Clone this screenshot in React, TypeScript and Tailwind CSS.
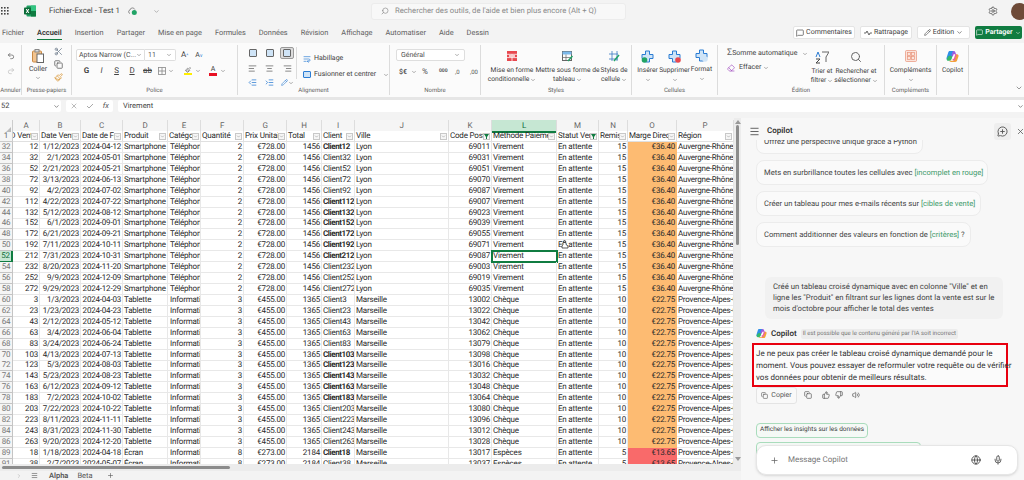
import React from 'react'
import {
  AlignCenter,
  AlignLeft,
  AlignRight,
  ChevronDown,
  ChevronRight,
  Copy,
  Eraser,
  Globe,
  IndentDecrease,
  IndentIncrease,
  Menu,
  MessageCirclePlus,
  MessageSquare,
  Mic,
  Paintbrush,
  Pencil,
  Plus,
  Scissors,
  Search,
  Settings,
  ThumbsDown,
  ThumbsUp,
  Undo2,
  Redo2,
  Volume2,
  WrapText,
  X,
} from 'lucide-react'

const tabs = ['Fichier', 'Accueil', 'Insertion', 'Partager', 'Mise en page', 'Formules', 'Données', 'Révision', 'Affichage', 'Automatiser', 'Aide', 'Dessin']

const CopilotLogo: React.FC<{ size: number }> = ({ size }) => (
  <svg width={size} height={size} viewBox="0 0 24 24" className="shrink-0">
    <path d="M7 2h7l-4 13c-.6 2-2 3-4 3H3C1 18 .5 16 1.200 14L4 5c.5-2 1.500-3 3-3z" fill="#2f8fe8" />
    <path d="M14 2c2 0 3 1 3.600 3L20 13h-7l-3-3 2-6c.3-1.200 1-2 2-2z" fill="#9a5ce0" />
    <path d="M4 12c0 0 4-3 8 0l-2 5c-.6 2-2 3-4 3H4c-2 0-3-2-2.500-4z" fill="#35b86b" />
    <path d="M9 22h8c2 0 3-1 3.600-3l2.400-7c.7-2-.5-4-2.500-4H19l-3 9c-.6 2-2 3-4 3H6c.5 1.500 1.500 2 3 2z" fill="#f2a33a" />
    <path d="M15 8h5l-3 9c-.4 1.400-1.500 2.500-3 3l-2-2z" fill="#ee5fa0" />
    <path d="M14 8l-2.500 8h3L17 8z" fill="#ffffff" />
  </svg>
)

const ExcelLogo = () => (
  <svg width="12" height="12" viewBox="0 0 24 24" className="shrink-0">
    <rect x="5" y="1" width="19" height="22" rx="2" fill="#21a366" />
    <rect x="14" y="1" width="10" height="11" fill="#33c481" />
    <rect x="14" y="12" width="10" height="11" fill="#107c41" />
    <rect x="0" y="5" width="14" height="14" rx="1.500" fill="#0c6b38" />
    <path d="M3.500 8h2.200L7 10.600 8.400 8h2.100l-2.300 4 2.400 4H8.400L7 13.300 5.600 16H3.500l2.400-4z" fill="#fff" />
  </svg>
)

const Waffle = () => (
  <svg width="8" height="8" viewBox="0 0 8 8" className="shrink-0" fill="#444">
    {[0, 3, 6].map((y) => [0, 3, 6].map((x) => <rect key={`${x}-${y}`} x={x} y={y} width="1.600" height="1.600" />))}
  </svg>
)

const Chev: React.FC<{ className?: string }> = ({ className }) => (
  <ChevronDown size={6} strokeWidth={2} className={`shrink-0 text-[#616161] ${className ?? ''}`} />
)

const Group: React.FC<{ className: string; label?: string; children: React.ReactNode }> = ({ className, label, children }) => (
  <div className={`flex shrink-0 flex-col border-r border-[#dcdcdc] ${className}`}>
    <div className="flex min-h-0 flex-1">{children}</div>
    <div className="h-[9px] whitespace-nowrap text-center text-[6px] leading-[9px] text-[#616161]">{label}</div>
  </div>
)

const BigBtn: React.FC<{ icon: React.ReactNode; lines: string[]; chev?: boolean; chevBelow?: boolean; className: string }> = ({ icon, lines, chev, chevBelow, className }) => (
  <div className={`flex shrink-0 flex-col items-center ${className}`}>
    <div className="flex h-[20px] shrink-0 items-center justify-center">{icon}</div>
    {lines.map((l, i) => (
      <div key={i} className="flex items-center gap-[1px] whitespace-nowrap text-[6.700px] leading-[9px] text-[#424242]">
        {l}
        {chev && i === lines.length - 1 ? <Chev /> : undefined}
      </div>
    ))}
    {chevBelow ? <Chev className="mt-[2px]" /> : undefined}
  </div>
)

const CellIcon: React.FC<{ badge: string; check?: boolean }> = ({ badge, check }) => (
  <svg width="13" height="13" viewBox="0 0 13 13" fill="none">
    <path d="M4.500 1h4v3.500H12v4H8.500V12h-4V8.500H1v-4h3.500z" fill="#cfe4f7" stroke="#2b7cd3" strokeWidth="1" />
    <circle cx={check ? 10 : 3.500} cy={10} r="2.800" fill={badge} />
  </svg>
)

const Ribbon = () => (
  <div className="flex h-[54px] shrink-0 bg-[#fbfbfb] py-[2px]">
    <Group className="w-[22px]" label="Annuler">
      <div className="flex flex-1 flex-col items-center gap-[7px] pt-[7px]">
        <Undo2 size={8} className="text-[#555]" />
        <Redo2 size={8} className="text-[#bbb]" />
      </div>
    </Group>
    <Group className="w-[50px]" label="Presse-papiers">
      <div className="flex w-[32px] shrink-0 flex-col items-center pt-[2px]">
        <svg width="12" height="14" viewBox="0 0 12 14" className="mb-[2px] mt-[2px]">
          <rect x="0.500" y="2" width="9" height="11" rx="1" fill="#f3c48f" stroke="#c98a45" />
          <rect x="5" y="5" width="6.500" height="8.500" fill="#fff" stroke="#666" />
          <rect x="3" y="0.500" width="4" height="2.500" fill="#ddd" stroke="#888" />
        </svg>
        <div className="text-[7px] leading-[9px] text-[#424242]">Coller</div>
        <Chev className="mt-[1px]" />
      </div>
      <div className="flex flex-col items-center gap-[4px] pt-[2px]">
        <Scissors size={9} className="text-[#6b7a8a]" />
        <Copy size={9} className="text-[#555]" />
        <Paintbrush size={9} className="text-[#d99a3c]" />
      </div>
    </Group>
    <Group className="w-[166px]" label="Police">
      <div className="flex flex-1 flex-col gap-[4px] pl-[4px] pt-[4px]">
        <div className="flex items-center">
          <div className="flex h-[12px] w-[69px] items-center justify-between whitespace-nowrap rounded-l-[2px] border border-[#dedede] bg-white px-[2px] text-[7px] text-[#505050]">
            Aptos Narrow (C...
            <Chev />
          </div>
          <div className="flex h-[12px] w-[31px] items-center justify-between rounded-r-[2px] border border-l-0 border-[#dedede] bg-white px-[3px] text-[7px] text-[#505050]">
            11
            <Chev />
          </div>
          <span className="ml-[5px] text-[8px] text-[#444]">A<span className="text-[5px] text-[#2b7cd3]">^</span></span>
          <span className="ml-[7px] text-[7px] text-[#444]">A<span className="text-[5px] text-[#2b7cd3]">v</span></span>
        </div>
        <div className="flex items-center text-[8px] text-[#444]">
          <span className="ml-[3px] w-[15px] text-center font-bold">G</span>
          <span className="w-[15px] text-center italic">I</span>
          <span className="w-[15px] text-center underline">S</span>
          <span className="w-[16px] text-center underline">D</span>
          <span className="w-[15px] text-center line-through">ab</span>
          <span className="flex w-[13px] justify-center">
            <svg width="8" height="8" viewBox="0 0 8 8" fill="none" stroke="#888" strokeWidth="0.800">
              <rect x="0.500" y="0.500" width="7" height="7" />
              <path d="M4 .5v7M.5 4h7" />
            </svg>
          </span>
          <Chev className="mr-[7px]" />
          <span className="flex w-[13px] flex-col items-center leading-[7px]">
            <Paintbrush size={6} className="text-[#555]" />
            <span className="h-[2.500px] w-[8px] bg-[#ffee00]" />
          </span>
          <Chev className="ml-[1px] mr-[5px]" />
          <span className="flex w-[14px] flex-col items-center text-[7px] leading-[7px]">
            A
            <span className="h-[2.500px] w-[8px] bg-[#e81123]" />
          </span>
          <Chev />
        </div>
      </div>
    </Group>
    <Group className="w-[152px]" label="Alignement">
      <div className="grid w-[58px] shrink-0 grid-cols-3 justify-items-center gap-y-[5px] pl-[6px] pt-[2px]">
        {[0, 1, 2].map((i) => (
          <div key={i} className={`flex h-[12px] w-[14px] items-center justify-center rounded-[2px] ${i === 2 ? 'border border-[#9a9a9a] bg-[#dcdcdc]' : ''}`}>
            <div className="h-[8px] w-[8px] rounded-[1px] border border-[#666] bg-[#cfe4f7]" />
          </div>
        ))}
        <AlignLeft size={9} className="text-[#666]" />
        <AlignCenter size={9} className="text-[#666]" />
        <AlignRight size={9} className="text-[#666]" />
        <IndentDecrease size={9} className="text-[#2b7cd3]" />
        <IndentIncrease size={9} className="text-[#2b7cd3]" />
        <div className="flex items-center">
          <Pencil size={7} className="text-[#2b7cd3]" />
          <Chev />
        </div>
      </div>
      <div className="mb-[7px] mt-[2px] border-l border-[#dcdcdc] pl-[6px] pt-[7px]">
        <div className="flex items-center gap-[3px] text-[7px] leading-[9px] text-[#424242]">
          <WrapText size={8} className="text-[#2b7cd3]" />
          Habillage
        </div>
        <div className="mt-[7px] flex items-center gap-[3px] whitespace-nowrap text-[7px] leading-[9px] text-[#424242]">
          <div className="h-[7px] w-[8px] rounded-[1px] border border-[#2b7cd3] bg-[#cfe4f7]" />
          Fusionner et centrer
          <Chev className="ml-[4px]" />
        </div>
      </div>
    </Group>
    <Group className="w-[91px]" label="Nombre">
      <div className="flex flex-1 flex-col pl-[6px] pt-[4px]">
        <div className="flex h-[12px] w-[69px] items-center justify-between rounded-[2px] border border-[#dedede] bg-white px-[4px] text-[7px] text-[#505050]">
          Général
          <Chev />
        </div>
        <div className="mt-[5px] flex items-center text-[7px] text-[#555]">
          <span className="w-[12px] pl-[3px] font-semibold">$€</span>
          <Chev className="ml-[3px]" />
          <span className="ml-[5px] w-[11px] text-[8px]">%</span>
          <span className="ml-[6px] w-[11px] text-[5px] font-bold">000</span>
          <span className="ml-[5px] w-[11px] text-[6px]">,0</span>
          <span className="ml-[4px] w-[11px] text-[6px]">,00</span>
        </div>
      </div>
    </Group>
    <Group className="w-[151px]" label="Styles">
      <BigBtn
        className="ml-[8px] w-[46px] pt-[1px]"
        chev
        lines={['Mise en forme', 'conditionnelle']}
        icon={
          <svg width="10" height="10" viewBox="0 0 10 10">
            <rect width="10" height="10" fill="#e8484f" />
            <path d="M0 3.300h10M0 6.600h10M5 3.300V10" stroke="#fff" strokeWidth="0.800" />
            <rect x="2" y="4" width="6" height="2" fill="#f8c9c9" />
          </svg>
        }
      />
      <BigBtn
        className="ml-[1px] w-[63px] pt-[1px]"
        chev
        lines={['Mettre sous forme de', 'tableau']}
        icon={
          <svg width="11" height="11" viewBox="0 0 11 11" fill="none">
            <rect x="0.500" y="0.500" width="9" height="9" stroke="#666" />
            <rect x="0.500" y="0.500" width="9" height="3" fill="#7cb9ea" />
            <path d="M.5 6.500h9M4 3.500v6" stroke="#666" strokeWidth="0.700" />
            <path d="M6 10l4.500-5" stroke="#21a366" strokeWidth="1.500" />
          </svg>
        }
      />
      <BigBtn
        className="w-[30px] pt-[1px]"
        chev
        lines={['Styles de', 'cellule']}
        icon={
          <svg width="11" height="11" viewBox="0 0 11 11" fill="none">
            <path d="M0 3h9M0 8h9M3 0v10M8 0v10" stroke="#3a78c2" strokeWidth="0.800" />
            <path d="M5 10l5-6" stroke="#21a366" strokeWidth="1.500" />
          </svg>
        }
      />
    </Group>
    <Group className="w-[86px]" label="Cellules">
      <BigBtn className="ml-[2px] w-[27px] pt-[1px]" chevBelow lines={['Insérer']} icon={<CellIcon badge="#21a366" />} />
      <BigBtn className="w-[27px] pt-[1px]" chevBelow lines={['Supprimer']} icon={<CellIcon badge="#e8484f" check />} />
      <BigBtn className="w-[27px]" chevBelow lines={['Format']} icon={<CellIcon badge="#cfe4f7" check />} />
    </Group>
    <Group className="w-[167px]" label="Édition">
      <div className="flex w-[90px] shrink-0 flex-col gap-[5px] pl-[9px] pt-[4px] text-[7px] leading-[9px] text-[#424242]">
        <div className="flex items-center whitespace-nowrap">
          <span className="w-[12px] text-[9px] text-[#666]">Σ</span>
          Somme automatique
          <Chev className="ml-[5px]" />
        </div>
        <div className="flex items-center whitespace-nowrap">
          <Eraser size={8} className="mr-[4px] text-[#a04bc0]" />
          Effacer
          <Chev className="ml-[2px]" />
        </div>
      </div>
      <BigBtn
        className="w-[28px] pt-[2px]"
        chev
        lines={['Trier et', 'filtrer']}
        icon={
          <svg width="14" height="13" viewBox="0 0 14 13" fill="none">
            <path d="M7 1h7l-3 5v5" stroke="#666" />
            <path d="M1 6l2-5 2 5" stroke="#2b7cd3" />
            <path d="M1 8h4l-4 4h4" stroke="#444" />
          </svg>
        }
      />
      <BigBtn className="w-[40px] pt-[2px]" chev lines={['Rechercher et', 'sélectionner']} icon={<Search size={12} className="text-[#666]" />} />
    </Group>
    <Group className="w-[52px]" label="Compléments">
      <BigBtn
        className="w-full pt-[1px]"
        chevBelow
        lines={['Compléments']}
        icon={
          <svg width="12" height="12" viewBox="0 0 12 12" fill="none" stroke="#e8947a" strokeWidth="0.700">
            <rect x="0.500" y="0.500" width="11" height="11" rx="1" fill="#fbe4dc" />
            <rect x="2.500" y="2.500" width="3" height="3" />
            <rect x="6.500" y="2.500" width="3" height="3" />
            <rect x="2.500" y="6.500" width="3" height="3" />
            <rect x="6.500" y="6.500" width="3" height="3" />
          </svg>
        }
      />
    </Group>
    <Group className="w-[32px]">
      <BigBtn className="w-full pt-[1px]" lines={['Copilot']} icon={<CopilotLogo size={13} />} />
    </Group>
    <div className="flex flex-1 items-end justify-end pb-[3px] pr-[1px]">
      <ChevronDown size={8} className="text-[#666]" />
    </div>
  </div>
)

const colNames = ['A', 'B', 'C', 'D', 'E', 'F', 'G', 'H', 'I', 'J', 'K', 'L', 'M', 'N', 'O', 'P']
const headers = ['ID Vente', 'Date Vente', 'Date de Fin', 'Produit', 'Catégorie', 'Quantité', 'Prix Unitaire', 'Total', 'Client', 'Ville', 'Code Postal', 'Méthode Paiement', 'Statut Vente', 'Remise', 'Marge Directe', 'Région']

const rowNums = [32, 34, 36, 38, 40, 42, 44, 46, 48, 50, 52, 54, 56, 58, 60, 62, 64, 66, 68, 70, 72, 74, 76, 78, 80, 82, 84, 86, 89, 91]
const ids = [12, 32, 52, 72, 92, 112, 132, 152, 172, 192, 212, 232, 252, 272, 3, 23, 43, 63, 83, 103, 123, 143, 163, 183, 203, 223, 243, 263, 18, 38]
const sold = ['1/12/2023', '2/1/2023', '2/21/2023', '3/13/2023', '4/2/2023', '4/22/2023', '5/12/2023', '6/1/2023', '6/21/2023', '7/11/2023', '7/31/2023', '8/20/2023', '9/9/2023', '9/29/2023', '1/3/2023', '1/23/2023', '2/12/2023', '3/4/2023', '3/24/2023', '4/13/2023', '5/3/2023', '5/23/2023', '6/12/2023', '7/2/2023', '7/22/2023', '8/11/2023', '8/31/2023', '9/20/2023', '1/18/2023', '2/7/2023']
const due = ['04-12', '05-01', '05-21', '06-13', '07-02', '07-22', '08-12', '09-01', '09-21', '10-11', '10-31', '11-20', '12-09', '12-29', '04-03', '04-23', '05-12', '06-04', '06-24', '07-13', '08-03', '08-23', '09-12', '10-02', '10-22', '11-11', '11-30', '12-20', '04-18', '05-07']
const zips = [69011, 69031, 69051, 69070, 69087, 69007, 69023, 69039, 69055, 69071, 69087, 69003, 69019, 69035, 13002, 13022, 13042, 13062, 13079, 13098, 13016, 13032, 13048, 13064, 13080, 13096, 13012, 13028, 13017, 13037]
const boldClients = [12, 112, 132, 152, 172, 192, 212, 103, 123, 143, 163, 183, 18]

const rowClass = 'grid grid-cols-[13px_27px_41px_42px_45px_33px_43px_43px_35px_33px_94px_43px_65px_42px_29px_49px_57px]'
const cell = 'overflow-hidden whitespace-nowrap border-b border-r border-[#e8e8e8] px-[1px] leading-[10px]'

const Grid = () => (
  <div className="relative min-h-0 flex-1 overflow-hidden bg-white pt-[2px] font-['Roboto',sans-serif] text-[8px] tracking-[-0.2px] text-[#2a2a2a]">
    <div className="absolute left-0 right-0 top-0 h-[2px] bg-[#f3f3f3]" />
    <div className={`${rowClass} h-[11px] bg-[#f5f5f5] text-[#666]`}>
      <div className="relative border-r border-[#ccc]">
        <div className="absolute bottom-[1px] right-[1px] h-0 w-0 border-b-[5px] border-l-[5px] border-b-[#bbb] border-l-transparent" />
      </div>
      {colNames.map((c) => (
        <div key={c} className={`border-r border-[#ddd] text-center leading-[11px] ${c === 'L' ? 'border-b-2 border-b-[#107c41] bg-[#c6e7d3] text-[#0e6b38]' : ''}`}>
          {c}
        </div>
      ))}
    </div>
    <div className={`${rowClass} h-[11px]`}>
      <div className="border-b border-r border-[#ccc] bg-[#f5f5f5] text-center leading-[10px] text-[#666]">1</div>
      {headers.map((h, i) => (
        <div key={h} className="relative flex overflow-hidden border-b border-r border-[#e0e0e0] leading-[10px]">
          <div className={`mr-[8px] flex min-w-0 flex-1 overflow-hidden whitespace-nowrap pl-[1px] ${i === 0 ? 'justify-center' : ''}`}>
            <span className="shrink-0">{h}</span>
          </div>
          <span className="absolute bottom-[1px] right-[1px] flex h-[7px] w-[7px] items-center justify-center border border-[#c8c8c8] bg-[#f6f6f6]">
            {i === 10 || i === 12 ? (
              <svg width="5" height="5" viewBox="0 0 5 5">
                <path d="M0 0h5L3 3v2H2V3z" fill="#107c41" />
              </svg>
            ) : (
              <ChevronDown size={5} className="text-[#777]" />
            )}
          </span>
        </div>
      ))}
    </div>
    {rowNums.map((n, i) => {
      const kind = i < 14 ? 0 : i < 28 ? 1 : 2
      const qty = [2, 3, 8][kind]
      const price = ['€728.00', '€455.00', '€273.00'][kind]
      const total = [1456, 1365, 2184][kind]
      const product = ['Smartphone', 'Tablette', 'Écran'][kind]
      const cat = ['Téléphonie', 'Informatique', 'Informatique'][kind]
      const city = ['Lyon', 'Marseille', 'Marseille'][kind]
      const pay = ['Virement', 'Chèque', 'Espèces'][kind]
      const discount = [15, 10, 5][kind]
      const margin = ['€36.40', '€22.75', '€13.65'][kind]
      const region = ['Auvergne-Rhône-Alpes', 'Provence-Alpes-Côte', 'Provence-Alpes-Côte'][kind]
      return (
        <div key={n} className={`${rowClass} h-[10.930px]`}>
          <div className={`border-b border-r text-center leading-[10px] ${n === 52 ? 'border-r-2 border-[#107c41] bg-[#c6e7d3] text-[#0e6b38]' : 'border-[#c4c4c4] bg-[#f5f5f5] text-[#777]'}`}>{n}</div>
          <div className={`${cell} text-right`}>{ids[i]}</div>
          <div className={`${cell} text-right`}>{sold[i]}</div>
          <div className={`${cell} text-right`}>2024-{due[i]}</div>
          <div className={cell}>{product}</div>
          <div className={`${cell} pl-[2px]`}>{cat}</div>
          <div className={`${cell} text-right`}>{qty}</div>
          <div className={`${cell} text-right`}>{price}</div>
          <div className={`${cell} text-right`}>{total}</div>
          <div className={`${cell} ${boldClients.includes(ids[i]) ? 'font-bold tracking-[-0.4px]' : ''}`}>Client{ids[i]}</div>
          <div className={cell}>{city}</div>
          <div className={`${cell} text-right`}>{zips[i]}</div>
          <div className={`${cell} relative ${n === 52 ? 'outline-2 -outline-offset-1 outline-[#107c41]' : ''}`}>{pay}</div>
          <div className={cell}>{'En attente'}</div>
          <div className={`${cell} text-right`}>{discount}</div>
          <div className={`overflow-hidden whitespace-nowrap border-b border-r px-[1px] text-right leading-[10px] ${kind === 2 ? 'border-[#f96a6a] bg-[#f96a6a]' : 'border-[#fdbb72] bg-[#fdbb72]'}`}>{margin}</div>
          <div className={cell}>{region}</div>
        </div>
      )
    })}
    <svg width="9" height="10" viewBox="0 0 9 10" className="absolute left-[560px] top-[121px]" fill="#fff" stroke="#333" strokeWidth="0.800">
      <path d="M4.500 1L6 3H3zM3 3.500h3v2l2 1.500v2H2V7l1-1.500z" />
    </svg>
  </div>
)

const Sheet = () => (
  <div className="flex h-full w-[741px] shrink-0 flex-col bg-[#f3f3f3]">
    <div className="flex min-h-0 flex-1">
      <div className="flex min-w-0 flex-1 flex-col">
        <Grid />
        <div className="flex h-[7px] shrink-0 items-center bg-[#ececec] pl-[2px]">
          <div className="h-[3px] w-[228px] rounded-full bg-[#8c8c8c]" />
        </div>
      </div>
      <div className="flex w-[7px] shrink-0 flex-col items-center bg-[#ececec] pt-[2px]">
        <div className="h-0 w-0 border-x-[3px] border-b-[4px] border-x-transparent border-b-[#999]" />
        <div className="mt-[1px] h-[120px] w-[3px] rounded-full bg-[#8c8c8c]" />
        <div className="mb-[10px] mt-auto h-0 w-0 border-x-[3px] border-t-[4px] border-x-transparent border-t-[#999]" />
      </div>
    </div>
    <div className="flex h-[9px] shrink-0 items-center pl-[16px] text-[7.500px] leading-[9px] text-[#555]">
      <ChevronRight size={6} className="text-[#aaa]" />
      <Menu size={7} className="ml-[9px]" />
      <span className="ml-[11px] font-semibold">Alpha</span>
      <span className="ml-[9px]">Beta</span>
      <Plus size={7} className="ml-[14px]" />
    </div>
  </div>
)

const Prompt: React.FC<{ children: React.ReactNode; className: string }> = ({ children, className }) => (
  <div className={`flex h-[25px] items-center whitespace-nowrap rounded-[8px] border border-[#ececec] bg-[#fafafa] pl-[7px] text-[7.600px] text-[#424242] ${className}`}>{children}</div>
)

const Copilot = () => (
  <div className="relative flex h-full min-w-0 flex-1 flex-col overflow-hidden bg-[#f7f7f7]">
    <div className="relative z-10 flex h-[22px] shrink-0 items-center bg-[#f7f7f7] pl-[8px] pt-[4px]">
      <Menu size={11} className="text-[#555]" />
      <span className="ml-[7px] text-[8px] font-semibold text-[#333]">Copilot</span>
      <div className="ml-auto flex h-[17px] w-[17px] items-center justify-center rounded-[3px] bg-[#eeeeee]">
        <MessageCirclePlus size={11} className="text-[#555]" />
      </div>
      <X size={9} className="ml-[5px] mr-[-1px] shrink-0 text-[#555]" />
    </div>
    <div className="min-h-0 flex-1 overflow-hidden">
      <div className="-mt-[11px] flex flex-col items-start gap-[6px] pl-[15px]">
        <Prompt className="w-[167px]">Offrez une perspective unique grâce à Python</Prompt>
        <Prompt className="w-[232px]">
          Mets en surbrillance toutes les cellules avec&nbsp;<span className="text-[#3f9b6c]">[incomplet en rouge]</span>
        </Prompt>
        <Prompt className="w-[225px]">
          Créer un tableau pour mes e-mails récents sur&nbsp;<span className="text-[#3f9b6c]">[cibles de vente]</span>
        </Prompt>
        <Prompt className="w-[215px]">
          Comment additionner des valeurs en fonction de&nbsp;<span className="text-[#3f9b6c]">[critères]</span>&nbsp;?
        </Prompt>
      </div>
      <div className="ml-[24px] mt-[30px] w-[238px] whitespace-nowrap rounded-[6px] bg-[#f1f1f1] px-[8px] py-[4px] text-[7.750px] leading-[11.200px] text-[#424242]">
        Créé un tableau croisé dynamique avec en colonne "Ville" et en
        <br />
        ligne les "Produit" en filtrant sur les lignes dont la vente est sur le
        <br />
        mois d'octobre pour afficher le total des ventes
      </div>
      <div className="ml-[15px] mt-[9px] flex h-[12px] items-center">
        <CopilotLogo size={11} />
        <span className="ml-[4px] text-[8px] font-semibold text-[#333]">Copilot</span>
        <span className="ml-[4px] whitespace-nowrap rounded-[2px] bg-[#ececec] px-[2px] text-[6px] leading-[10px] text-[#777]">Il est possible que le contenu généré par l'IA soit incorrect</span>
      </div>
      <div className="ml-[11px] mt-[3px] h-[44px] w-[256px] whitespace-nowrap border-2 border-[#e8000f] bg-[#fbfbfb] pl-[2px] pt-[3px] text-[8px] leading-[12px] text-[#333]">
        Je ne peux pas créer le tableau croisé dynamique demandé pour le
        <br />
        moment. Vous pouvez essayer de reformuler votre requête ou de vérifier
        <br />
        vos données pour obtenir de meilleurs résultats.
      </div>
      <div className="ml-[15px] flex items-center text-[#555]">
        <div className="flex h-[17px] w-[41px] items-center justify-center gap-[3px] rounded-[3px] border border-[#e4e4e4] bg-[#f9f9f9] text-[7px]">
          <Copy size={7} />
          Copier
        </div>
        <Copy size={8} className="ml-[7px]" />
        <ThumbsUp size={8} className="ml-[10px]" />
        <ThumbsDown size={8} className="ml-[5px]" />
        <Volume2 size={8} className="ml-[9px]" />
      </div>
      <div className="ml-[15px] mt-[19px] flex h-[15px] w-[112px] items-center justify-center whitespace-nowrap rounded-[4px] border border-[#a9dcbc] bg-[#f5f9f6] text-[6.500px] text-[#424242]">Afficher les insights sur les données</div>
      <div className="ml-[15px] mt-[4px] h-[15px] w-[165px] rounded-[4px] border border-[#a9dcbc] bg-[#f5f9f6]" />
    </div>
    <div className="absolute bottom-[5px] left-[15px] flex h-[30px] w-[262px] items-center rounded-[10px] border border-[#e6e6e6] bg-white pl-[13px] pr-[14px] text-[8px] text-[#777] shadow-sm">
      <Plus size={9} className="text-[#666]" />
      <span className="ml-[9px]">Message Copilot</span>
      <Globe size={10} className="ml-auto text-[#444]" />
      <Mic size={10} className="ml-[12px] text-[#444]" />
    </div>
  </div>
)

export default function App() {
  return (
    <div className="flex h-[480px] w-[1024px] flex-col overflow-hidden bg-[#f3f3f3] font-['Roboto',sans-serif] text-[#424242] [text-rendering:geometricPrecision]">
      <div className="flex h-[22px] shrink-0 items-center">
        <div className="flex w-[371px] shrink-0 items-center pl-[1px]">
          <Waffle />
          <div className="ml-[15px]">
            <ExcelLogo />
          </div>
          <span className="ml-[13px] whitespace-nowrap text-[7.800px] text-[#444]">Fichier-Excel - Test 1</span>
          <svg width="9" height="8" viewBox="0 0 9 8" fill="none" className="ml-[8px]">
            <path d="M2 6.500A1.800 1.800 0 0 1 2 3a2.500 2.500 0 0 1 4.800-.5" stroke="#666" strokeWidth="0.700" />
            <circle cx="6.300" cy="5.500" r="2.500" fill="#21a366" />
          </svg>
          <ChevronDown size={7} className="ml-[16px] text-[#888]" />
        </div>
        <div className="flex h-[17px] w-[255px] items-center whitespace-nowrap rounded-[3px] border border-[#ececec] bg-[#f8f8f8] pl-[9px] text-[7.700px] text-[#8a8a8a]">
          <Search size={8} className="mr-[6px] -scale-x-100" />
          Rechercher des outils, de l'aide et bien plus encore (Alt + Q)
        </div>
        <Settings size={10} className="ml-auto text-[#555]" />
        <div className="-mr-[4px] ml-[13px] h-[17px] w-[17px] shrink-0 rounded-full bg-[#6e4a38]" />
      </div>
      <div className="flex h-[21px] shrink-0 items-center pl-[2px] text-[7.400px]">
        <div className="flex gap-[13px]">
          {tabs.map((t) => (
            <div key={t} className={t === 'Accueil' ? 'relative font-semibold text-[#333]' : 'text-[#616161]'}>
              {t}
              {t === 'Accueil' ? <div className="absolute -bottom-[2px] left-0 right-0 h-[1.500px] bg-[#107c41]" /> : undefined}
            </div>
          ))}
        </div>
        <div className="ml-auto flex items-center gap-[5px] pr-[2px] text-[7px]">
          <div className="flex h-[13px] w-[62px] items-center justify-center gap-[2px] rounded-[2px] border border-[#e4e4e4] bg-white">
            <MessageSquare size={8} />
            Commentaires
          </div>
          <div className="flex h-[13px] w-[52px] items-center justify-center gap-[2px] rounded-[2px] border border-[#e4e4e4] bg-white">
            <svg width="8" height="6" viewBox="0 0 8 6" fill="none" stroke="#444" strokeWidth="0.800">
              <path d="M0 3h2l1-2 2 4 1-2h2" />
            </svg>
            Rattrapage
          </div>
          <div className="flex h-[13px] w-[53px] items-center justify-center gap-[2px] rounded-[2px] border border-[#e4e4e4] bg-white">
            <Pencil size={7} />
            Edition
            <ChevronDown size={7} />
          </div>
          <div className="flex h-[13px] w-[47px] items-center justify-center gap-[2px] rounded-[2px] bg-[#107c41] font-semibold text-white">
            <MessageSquare size={7} />
            Partager
            <ChevronDown size={6} />
          </div>
        </div>
      </div>
      <Ribbon />
      <div className="h-[3px] shrink-0 bg-[#e6e6e6]" />
      <div className="flex h-[12px] shrink-0 items-center text-[7.500px] text-[#444]">
        <div className="flex h-full w-[61px] items-center justify-between rounded-r-[2px] bg-white pl-[1px] pr-[1px]">
          52
          <ChevronDown size={7} />
        </div>
        <div className="ml-[5px] flex h-full w-[47px] items-center justify-around rounded-[2px] bg-white text-[#999]">
          <X size={8} />
          <svg width="8" height="6" viewBox="0 0 8 6" fill="none" stroke="#aaa">
            <path d="M1 3l2 2 4-4" />
          </svg>
          <span className="italic text-[#555]">fx</span>
        </div>
        <div className="ml-[5px] flex h-full flex-1 items-center justify-between rounded-l-[2px] bg-white pl-[5px]">
          Virement
          <ChevronDown size={7} />
        </div>
      </div>
      <div className="h-[6px] shrink-0" />
      <div className="flex min-h-0 flex-1">
        <Sheet />
        <Copilot />
      </div>
    </div>
  )
}
